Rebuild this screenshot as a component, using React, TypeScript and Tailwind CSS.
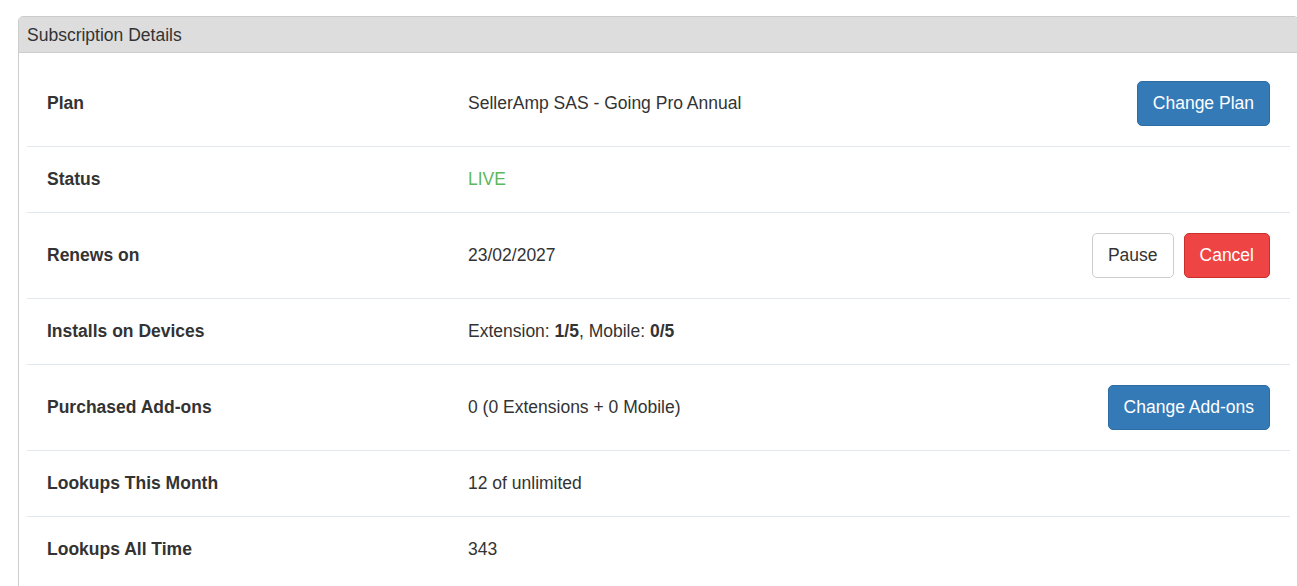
import React from "react";

const Row = ({
  label,
  children,
  actions,
  last,
}: {
  label: string;
  children: React.ReactNode;
  actions?: React.ReactNode;
  last?: boolean;
}) => (
  <div
    className={`flex items-center min-h-[65px] ${last ? "" : "border-b border-[#e3e8ee]"}`}
  >
    <div className="w-1/3 pl-[20px] py-[20px] font-bold leading-[25px]">{label}</div>
    <div className="flex-1 pl-[20px] py-[20px] leading-[25px]">{children}</div>
    {actions && <div className="pr-[20px] py-[20px] flex gap-[10px] items-center">{actions}</div>}
  </div>
);

const btn = "h-[45px] px-[15px] rounded-[5px] text-[17.5px] leading-[25px] border";

export default function App() {
  return (
    <div
      className="w-[1297px] h-[586px] overflow-hidden bg-white text-[#333333] text-[17.5px]"
      style={{ fontFamily: '"Liberation Sans", Arial, sans-serif' }}
    >
      <div className="pl-[18px] pt-[16px]">
        <div className="w-[1281px] border border-[#cccccc] rounded-t-[5px] overflow-hidden">
          <div className="bg-[#dddddd] border-b border-[#cccccc] h-[36px] px-[8px] pt-[1px] flex items-center leading-[25px]">
            Subscription Details
          </div>
          <div className="px-[8px] pt-[8px] pb-[10px]">
            <Row
              label="Plan"
              actions={
                <button className={`${btn} bg-[#337ab7] border-[#2e6da4] text-white`}>Change Plan</button>
              }
            >
              SellerAmp SAS - Going Pro Annual
            </Row>
            <Row label="Status">
              <span className="text-[#5cb85c]">LIVE</span>
            </Row>
            <Row
              label="Renews on"
              actions={
                <>
                  <button className={`${btn} bg-white border-[#cccccc] text-[#333333]`}>Pause</button>
                  <button className={`${btn} bg-[#ef4444] border-[#c9302c] text-white`}>Cancel</button>
                </>
              }
            >
              23/02/2027
            </Row>
            <Row label="Installs on Devices">
              Extension: <b>1/5</b>, Mobile: <b>0/5</b>
            </Row>
            <Row
              label="Purchased Add-ons"
              actions={
                <button className={`${btn} bg-[#337ab7] border-[#2e6da4] text-white`}>Change Add-ons</button>
              }
            >
              0 (0 Extensions + 0 Mobile)
            </Row>
            <Row label="Lookups This Month">12 of unlimited</Row>
            <Row label="Lookups All Time" last>
              343
            </Row>
          </div>
        </div>
      </div>
    </div>
  );
}
